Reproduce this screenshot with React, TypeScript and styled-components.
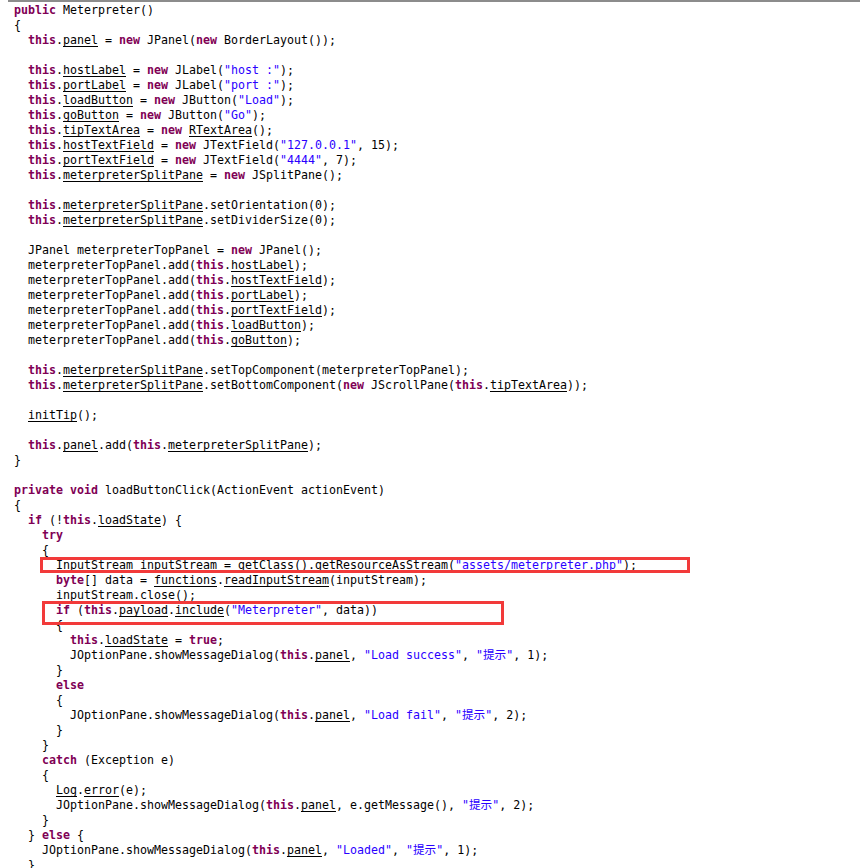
import React from "react";
import styled, { createGlobalStyle } from "styled-components";

const Global = createGlobalStyle`
  html, body { margin: 0; padding: 0; background: #ffffff; }
  body { width: 860px; height: 868px; overflow: hidden; }
`;

const Page = styled.div`
  position: relative;
  width: 860px;
  height: 868px;
  background: #ffffff;
  overflow: hidden;
`;

const CodePanel = styled.div`
  margin-left: 8px;
  border-top: 2px solid #8c8c8c;
  padding: 1px 0 0 6px;
  font-family: "DejaVu Sans Mono", "Noto Sans CJK SC", monospace;
  font-size: 11.63px;
  line-height: 15px;
  color: #000000;
`;

const Line = styled.div`
  height: 15px;
  white-space: pre;
`;

const Token = styled.span<{ $kind: "k" | "s" | "u" | "p" }>`
  color: ${(p) => (p.$kind === "k" ? "#7f0055" : p.$kind === "s" ? "#2a00ff" : "#000000")};
  font-weight: ${(p) => (p.$kind === "k" ? 700 : 400)};
  text-decoration: ${(p) => (p.$kind === "u" ? "underline" : "none")};
  text-underline-offset: 2px;
  font-family: ${(p) => (p.$kind === "s" ? '"DejaVu Sans Mono", "Noto Sans CJK SC", monospace' : "inherit")};
`;

const Highlight = styled.div<{ $left: number; $top: number; $w: number; $h: number }>`
  position: absolute;
  left: ${(p) => p.$left}px;
  top: ${(p) => p.$top}px;
  width: ${(p) => p.$w}px;
  height: ${(p) => p.$h}px;
  box-sizing: border-box;
  border: 3px solid #f23a3a;
  pointer-events: none;
`;

const src: [number, string][] = [
  [0, "[[k:public]] Meterpreter()"],
  [0, "{"],
  [2, "[[k:this]].[[u:panel]] = [[k:new]] JPanel([[k:new]] BorderLayout());"],
  [0, ""],
  [2, '[[k:this]].[[u:hostLabel]] = [[k:new]] JLabel([[s:"host :"]]);'],
  [2, '[[k:this]].[[u:portLabel]] = [[k:new]] JLabel([[s:"port :"]]);'],
  [2, '[[k:this]].[[u:loadButton]] = [[k:new]] JButton([[s:"Load"]]);'],
  [2, '[[k:this]].[[u:goButton]] = [[k:new]] JButton([[s:"Go"]]);'],
  [2, "[[k:this]].[[u:tipTextArea]] = [[k:new]] [[u:RTextArea]]();"],
  [2, '[[k:this]].[[u:hostTextField]] = [[k:new]] JTextField([[s:"127.0.0.1"]], 15);'],
  [2, '[[k:this]].[[u:portTextField]] = [[k:new]] JTextField([[s:"4444"]], 7);'],
  [2, "[[k:this]].[[u:meterpreterSplitPane]] = [[k:new]] JSplitPane();"],
  [0, ""],
  [2, "[[k:this]].[[u:meterpreterSplitPane]].setOrientation(0);"],
  [2, "[[k:this]].[[u:meterpreterSplitPane]].setDividerSize(0);"],
  [0, ""],
  [2, "JPanel meterpreterTopPanel = [[k:new]] JPanel();"],
  [2, "meterpreterTopPanel.add([[k:this]].[[u:hostLabel]]);"],
  [2, "meterpreterTopPanel.add([[k:this]].[[u:hostTextField]]);"],
  [2, "meterpreterTopPanel.add([[k:this]].[[u:portLabel]]);"],
  [2, "meterpreterTopPanel.add([[k:this]].[[u:portTextField]]);"],
  [2, "meterpreterTopPanel.add([[k:this]].[[u:loadButton]]);"],
  [2, "meterpreterTopPanel.add([[k:this]].[[u:goButton]]);"],
  [0, ""],
  [2, "[[k:this]].[[u:meterpreterSplitPane]].setTopComponent(meterpreterTopPanel);"],
  [2, "[[k:this]].[[u:meterpreterSplitPane]].setBottomComponent([[k:new]] JScrollPane([[k:this]].[[u:tipTextArea]]));"],
  [0, ""],
  [2, "[[u:initTip]]();"],
  [0, ""],
  [2, "[[k:this]].[[u:panel]].add([[k:this]].[[u:meterpreterSplitPane]]);"],
  [0, "}"],
  [0, ""],
  [0, "[[k:private]] [[k:void]] loadButtonClick(ActionEvent actionEvent)"],
  [0, "{"],
  [2, "[[k:if]] (![[k:this]].[[u:loadState]]) {"],
  [4, "[[k:try]]"],
  [4, "{"],
  [6, 'InputStream inputStream = getClass().getResourceAsStream([[s:"assets/meterpreter.php"]]);'],
  [6, "[[k:byte]][] data = [[u:functions]].[[u:readInputStream]](inputStream);"],
  [6, "inputStream.close();"],
  [6, '[[k:if]] ([[k:this]].[[u:payload]].[[u:include]]([[s:"Meterpreter"]], data))'],
  [6, "{"],
  [8, "[[k:this]].[[u:loadState]] = [[k:true]];"],
  [8, 'JOptionPane.showMessageDialog([[k:this]].[[u:panel]], [[s:"Load success"]], [[s:"提示"]], 1);'],
  [6, "}"],
  [6, "[[k:else]]"],
  [6, "{"],
  [8, 'JOptionPane.showMessageDialog([[k:this]].[[u:panel]], [[s:"Load fail"]], [[s:"提示"]], 2);'],
  [6, "}"],
  [4, "}"],
  [4, "[[k:catch]] (Exception e)"],
  [4, "{"],
  [6, "[[u:Log]].[[u:error]](e);"],
  [6, 'JOptionPane.showMessageDialog([[k:this]].[[u:panel]], e.getMessage(), [[s:"提示"]], 2);'],
  [4, "}"],
  [2, "} [[k:else]] {"],
  [4, 'JOptionPane.showMessageDialog([[k:this]].[[u:panel]], [[s:"Loaded"]], [[s:"提示"]], 1);'],
  [2, "}"],
];

type Seg = { kind: "k" | "s" | "u" | "p"; text: string };

function parse(line: string): Seg[] {
  const out: Seg[] = [];
  const re = /\[\[(k|s|u):(.*?)\]\]/g;
  let last = 0;
  let m: RegExpExecArray | null;
  while ((m = re.exec(line))) {
    if (m.index > last) out.push({ kind: "p", text: line.slice(last, m.index) });
    out.push({ kind: m[1] as Seg["kind"], text: m[2] });
    last = m.index + m[0].length;
  }
  if (last < line.length) out.push({ kind: "p", text: line.slice(last) });
  return out;
}

export default function App() {
  return (
    <Page>
      <Global />
      <CodePanel>
        {src.map(([indent, text], i) => (
          <Line key={i}>
            {" ".repeat(indent)}
            {parse(text).map((s, j) => (
              <Token key={j} $kind={s.kind}>
                {s.text}
              </Token>
            ))}
          </Line>
        ))}
      </CodePanel>
      <Highlight $left={40} $top={557} $w={650} $h={16} />
      <Highlight $left={42} $top={601} $w={462} $h={24} />
    </Page>
  );
}
